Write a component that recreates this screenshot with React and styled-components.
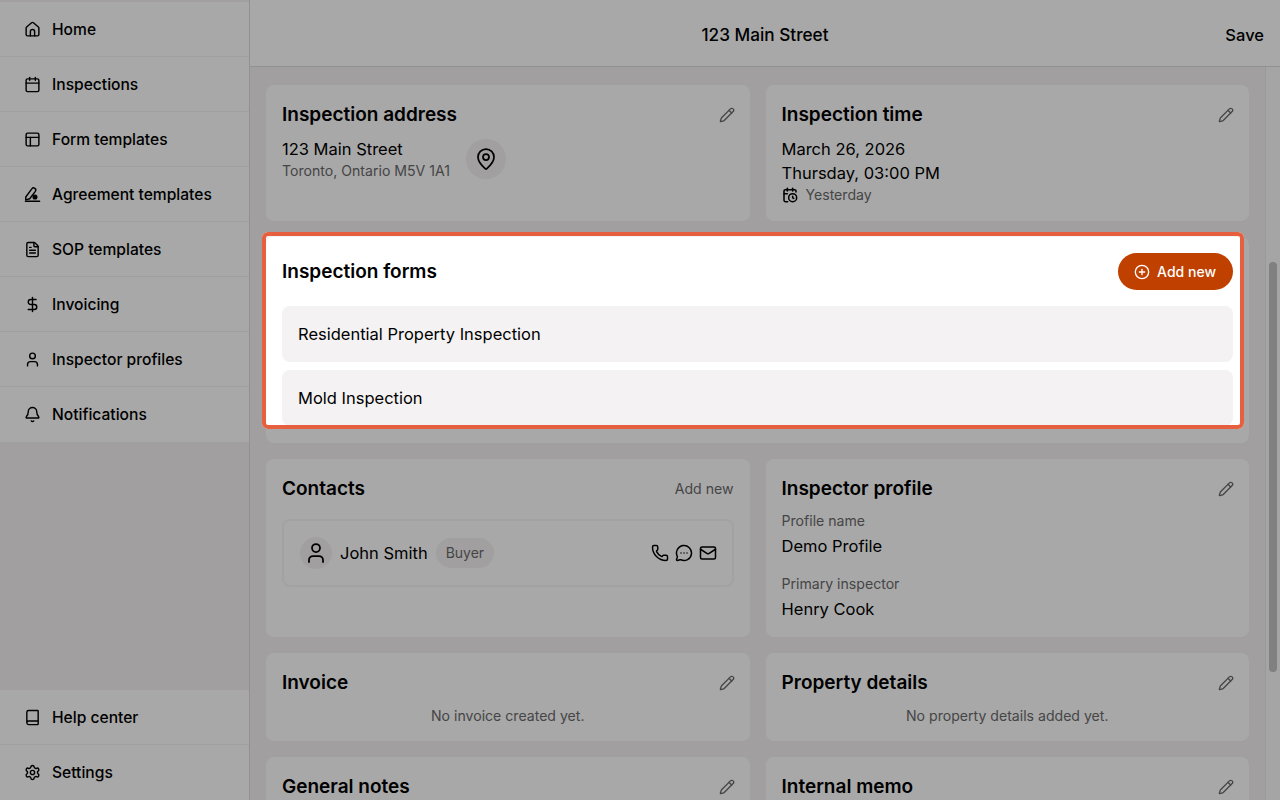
import { createGlobalStyle, styled } from "styled-components";
import {
  Book,
  Bell,
  Calendar,
  CalendarClock,
  CirclePlus,
  DollarSign,
  FileText,
  Mail,
  MapPin,
  MessageCircleMore,
  PanelsTopLeft,
  Pencil,
  Phone,
  Settings,
  User,
} from "lucide-react";

const GlobalStyle = createGlobalStyle`
  html, body {
    margin: 0;
    height: 100%;
    overflow: hidden;
    background: #f4f2f3;
    font-family: Inter, "Liberation Sans", sans-serif;
    color: #000;
  }
`;

const NavSvg = ({ size, children }) => (
  <svg
    width={size}
    height={size}
    viewBox="0 0 24 24"
    fill="none"
    stroke="currentColor"
    strokeWidth="2"
    strokeLinecap="round"
    strokeLinejoin="round"
  >
    {children}
  </svg>
);

const HomeIcon = ({ size }) => (
  <NavSvg size={size}>
    <path d="M3 10a2 2 0 0 1 .709-1.528l7-6a2 2 0 0 1 2.582 0l7 6A2 2 0 0 1 21 10v9a2 2 0 0 1-2 2H5a2 2 0 0 1-2-2z" />
    <path d="M9 21v-6a3 3 0 0 1 6 0v6" />
  </NavSvg>
);

const SignIcon = ({ size }) => (
  <NavSvg size={size}>
    <path d="M2.5 15.5 11 4a3 3 0 0 1 5 3.5L8 18l-5.5 1.5z" />
    <circle cx="15.5" cy="15.5" r="2.6" fill="currentColor" />
    <path d="M2 21.5h20" />
  </NavSvg>
);

const topNav = [
  [HomeIcon, "Home"],
  [Calendar, "Inspections"],
  [PanelsTopLeft, "Form templates"],
  [SignIcon, "Agreement templates"],
  [FileText, "SOP templates"],
  [DollarSign, "Invoicing"],
  [User, "Inspector profiles"],
  [Bell, "Notifications"],
];

const bottomNav = [
  [Book, "Help center"],
  [Settings, "Settings"],
];

const App = () => {
  return (
    <>
      <GlobalStyle />
      <Page>
        <Sidebar>
          <NavGroup>
            {topNav.map(([Icon, label]) => (
              <NavItem key={label}>
                <Icon size={17} />
                {label}
              </NavItem>
            ))}
          </NavGroup>
          <NavGroup>
            {bottomNav.map(([Icon, label]) => (
              <NavItem key={label}>
                <Icon size={17} />
                {label}
              </NavItem>
            ))}
          </NavGroup>
        </Sidebar>
        <Main>
          <Header>
            <HeaderTitle>123 Main Street</HeaderTitle>
            <SaveButton>Save</SaveButton>
          </Header>
          <Content>
            <Grid>
              <Card>
                <CardHead>
                  <CardTitle>Inspection address</CardTitle>
                  <EditIcon />
                </CardHead>
                <AddressRow>
                  <div>
                    <Value>123 Main Street</Value>
                    <Muted>Toronto, Ontario M5V 1A1</Muted>
                  </div>
                  <Circle $size={40}>
                    <MapPin size={24} strokeWidth={1.75} />
                  </Circle>
                </AddressRow>
              </Card>
              <Card>
                <CardHead>
                  <CardTitle>Inspection time</CardTitle>
                  <EditIcon />
                </CardHead>
                <Value>March 26, 2026</Value>
                <Value>Thursday, 03:00 PM</Value>
                <WhenRow>
                  <CalendarClock size={16} strokeWidth={2.3} />
                  <Muted>Yesterday</Muted>
                </WhenRow>
              </Card>
              <WideCard>
                <FormsHead>
                  <CardTitle>Inspection forms</CardTitle>
                  <AddButton>
                    <CirclePlus size={16} />
                    Add new
                  </AddButton>
                </FormsHead>
                <FormList>
                  <FormItem>Residential Property Inspection</FormItem>
                  <FormItem>Mold Inspection</FormItem>
                </FormList>
              </WideCard>
              <Card>
                <CardHead>
                  <CardTitle>Contacts</CardTitle>
                  <Muted>Add new</Muted>
                </CardHead>
                <ContactBox>
                  <Circle $size={32}>
                    <User size={24} strokeWidth={1.75} />
                  </Circle>
                  <Value>John Smith</Value>
                  <Chip>Buyer</Chip>
                  <ContactActions>
                    <Phone size={18} />
                    <MessageCircleMore size={18} />
                    <Mail size={18} />
                  </ContactActions>
                </ContactBox>
              </Card>
              <Card>
                <CardHead>
                  <CardTitle>Inspector profile</CardTitle>
                  <EditIcon />
                </CardHead>
                <Field>
                  <Muted>Profile name</Muted>
                  <Value>Demo Profile</Value>
                </Field>
                <Field>
                  <Muted>Primary inspector</Muted>
                  <Value>Henry Cook</Value>
                </Field>
              </Card>
              <Card>
                <CardHead>
                  <CardTitle>Invoice</CardTitle>
                  <EditIcon />
                </CardHead>
                <Empty>No invoice created yet.</Empty>
              </Card>
              <Card>
                <CardHead>
                  <CardTitle>Property details</CardTitle>
                  <EditIcon />
                </CardHead>
                <Empty>No property details added yet.</Empty>
              </Card>
              <Card>
                <CardHead>
                  <CardTitle>General notes</CardTitle>
                  <EditIcon />
                </CardHead>
              </Card>
              <Card>
                <CardHead>
                  <CardTitle>Internal memo</CardTitle>
                  <EditIcon />
                </CardHead>
              </Card>
            </Grid>
          </Content>
          <ScrollTrack>
            <ScrollThumb />
          </ScrollTrack>
        </Main>
        <Spotlight />
      </Page>
    </>
  );
};

const Page = styled.div`
  position: relative;
  display: flex;
  width: 1280px;
  height: 800px;
  overflow: hidden;
`;

const Sidebar = styled.nav`
  flex: 0 0 250px;
  box-sizing: border-box;
  padding-top: 2px;
  border-right: 1px solid #dedcdd;
  display: flex;
  flex-direction: column;
  justify-content: space-between;
`;

const NavGroup = styled.div`
  display: flex;
  flex-direction: column;
  background: #fff;
`;

const NavItem = styled.div`
  height: 55px;
  box-sizing: border-box;
  display: flex;
  align-items: center;
  gap: 11.5px;
  padding-left: 23.5px;
  font-size: 15.6px;
  font-weight: 500;
  border-bottom: 1px solid #f4f2f3;

  &:last-child {
    border-bottom-color: transparent;
  }
`;

const Main = styled.main`
  position: relative;
  flex: 1;
  min-width: 0;
  display: flex;
  flex-direction: column;
`;

const Header = styled.header`
  flex: 0 0 67px;
  box-sizing: border-box;
  padding-top: 3px;
  position: relative;
  display: flex;
  align-items: center;
  justify-content: center;
  background: #fff;
  border-bottom: 1px solid #dedcdd;
`;

const HeaderTitle = styled.div`
  font-size: 17.2px;
  font-weight: 500;
`;

const SaveButton = styled.div`
  position: absolute;
  right: 16px;
  top: 25px;
  font-size: 16.5px;
  font-weight: 500;
`;

const Content = styled.div`
  flex: 1;
  min-height: 0;
  overflow: hidden;
  padding: 18px 31px 0 16px;
`;

const Grid = styled.div`
  display: grid;
  grid-template-columns: 1fr 1fr;
  gap: 16px;
`;

const Card = styled.section`
  box-sizing: border-box;
  background: #fff;
  border-radius: 8px;
  padding: 16px;
  display: flex;
  flex-direction: column;
`;

const WideCard = styled(Card)`
  grid-column: 1 / -1;
  padding-bottom: 17px;
`;

const CardHead = styled.div`
  display: flex;
  align-items: center;
  justify-content: space-between;
  height: 28px;
  margin-bottom: 8px;
`;

const CardTitle = styled.h2`
  margin: 0;
  font-size: 19px;
  line-height: 28px;
  font-weight: 600;
`;

const EditIcon = styled(Pencil).attrs({ size: 16 })`
  color: #6b6a6b;
  margin-right: -1px;
`;

const AddressRow = styled.div`
  display: flex;
  align-items: center;
  gap: 16px;
`;

const Value = styled.div`
  font-size: 16.5px;
  line-height: 24px;
`;

const Muted = styled.div`
  font-size: 14.1px;
  line-height: 20px;
  color: #6b6a6b;
`;

const Circle = styled.div`
  flex: none;
  width: ${(p) => p.$size}px;
  height: ${(p) => p.$size}px;
  border-radius: 50%;
  background: #f4f2f3;
  display: flex;
  align-items: center;
  justify-content: center;
`;

const WhenRow = styled.div`
  display: flex;
  align-items: center;
  gap: 8px;
`;

const FormsHead = styled.div`
  display: flex;
  align-items: center;
  justify-content: space-between;
  margin-bottom: 16px;
`;

const AddButton = styled.div`
  height: 37px;
  box-sizing: border-box;
  display: flex;
  align-items: center;
  gap: 7px;
  padding: 0 17px 0 16px;
  border-radius: 999px;
  background: #c04000;
  color: #fff;
  font-size: 14px;
  font-weight: 500;
`;

const FormList = styled.div`
  display: flex;
  flex-direction: column;
  gap: 8px;
`;

const FormItem = styled.div`
  height: 56px;
  display: flex;
  align-items: center;
  padding: 0 16px;
  border-radius: 8px;
  background: #f4f2f3;
  font-size: 16.5px;
`;

const ContactBox = styled.div`
  margin-top: 8px;
  height: 68px;
  box-sizing: border-box;
  display: flex;
  align-items: center;
  padding: 0 15px 0 16px;
  border: 2px solid #f7f6f6;
  border-radius: 8px;
  gap: 8px;
`;

const Chip = styled.div`
  padding: 5px 10px;
  border-radius: 999px;
  background: #f4f2f3;
  color: #6b6a6b;
  font-size: 14px;
  line-height: 20px;
`;

const ContactActions = styled.div`
  margin-left: auto;
  display: flex;
  gap: 6px;
`;

const Field = styled.div`
  & + & {
    margin-top: 16px;
  }

  ${Muted} {
    margin-bottom: 3px;
  }
`;

const Empty = styled(Muted)`
  text-align: center;
  margin: 1px 0 -1px;
`;

const ScrollTrack = styled.div`
  position: absolute;
  top: 67px;
  right: 0;
  bottom: 0;
  width: 15px;
  background: #fafafa;
  border-left: 1px solid #e8e8e8;
  box-sizing: border-box;
`;

const ScrollThumb = styled.div`
  position: absolute;
  top: 195px;
  left: 3px;
  width: 8px;
  height: 410px;
  border-radius: 4px;
  background: #c2c2c2;
`;

/* dims everything except the card being pointed at */
const Spotlight = styled.div`
  position: absolute;
  left: 262px;
  top: 232px;
  width: 982px;
  height: 197px;
  box-sizing: border-box;
  border: 4px solid #e6603f;
  border-radius: 6px;
  box-shadow: 0 0 0 2000px rgba(0, 0, 0, 0.34);
`;

export default App;
